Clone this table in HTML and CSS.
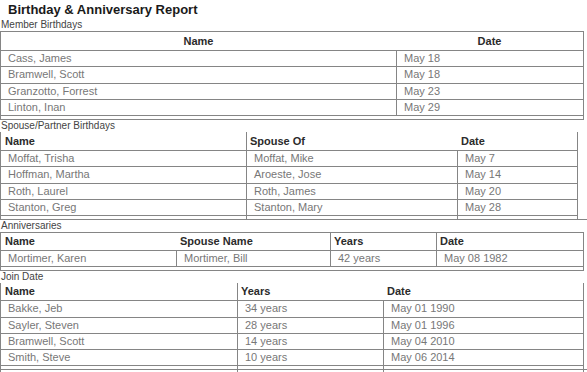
FILE: index.html
```html
<!DOCTYPE html>
<html lang="en">
<head>
<meta charset="utf-8">
<title>Birthday &amp; Anniversary Report</title>
<link rel="stylesheet" href="styles.css">
</head>
<body>
<main class="report">
  <h1 class="title">Birthday &amp; Anniversary Report</h1>

  <div class="sec-label">Member Birthdays</div>
  <div class="tbl tbl--top t1">
    <div class="tr th-row th-row--tall">
      <div class="th th--center">Name</div>
      <div class="th th--center">Date</div>
    </div>
    <div class="tr"><div class="td">Cass, James</div><div class="td sep">May 18</div></div>
    <div class="tr"><div class="td">Bramwell, Scott</div><div class="td sep">May 18</div></div>
    <div class="tr"><div class="td">Granzotto, Forrest</div><div class="td sep">May 23</div></div>
    <div class="tr"><div class="td">Linton, Inan</div><div class="td sep">May 29</div></div>
    <div class="spacer"></div>
  </div>

  <div class="sec-label">Spouse/Partner Birthdays</div>
  <div class="tbl tbl--open t2">
    <div class="tr th-row th-row--mid">
      <div class="th">Name</div>
      <div class="th sep">Spouse Of</div>
      <div class="th">Date</div>
    </div>
    <div class="tr"><div class="td">Moffat, Trisha</div><div class="td sep">Moffat, Mike</div><div class="td sep">May 7</div></div>
    <div class="tr"><div class="td">Hoffman, Martha</div><div class="td sep">Aroeste, Jose</div><div class="td sep">May 14</div></div>
    <div class="tr"><div class="td">Roth, Laurel</div><div class="td sep">Roth, James</div><div class="td sep">May 20</div></div>
    <div class="tr"><div class="td">Stanton, Greg</div><div class="td sep">Stanton, Mary</div><div class="td sep">May 28</div></div>
    <div class="tr spacer-row"><div></div><div class="sep"></div><div class="sep"></div></div>
  </div>
  <div class="rule"></div>

  <div class="sec-label">Anniversaries</div>
  <div class="tbl tbl--top t3">
    <div class="tr th-row">
      <div class="th">Name</div>
      <div class="th">Spouse Name</div>
      <div class="th sep">Years</div>
      <div class="th sep">Date</div>
    </div>
    <div class="tr"><div class="td">Mortimer, Karen</div><div class="td sep">Mortimer, Bill</div><div class="td sep">42 years</div><div class="td sep">May 08 1982</div></div>
    <div class="spacer"></div>
  </div>

  <div class="sec-label">Join Date</div>
  <div class="tbl tbl--open t4">
    <div class="tr th-row">
      <div class="th">Name</div>
      <div class="th sep">Years</div>
      <div class="th">Date</div>
    </div>
    <div class="tr"><div class="td">Bakke, Jeb</div><div class="td sep">34 years</div><div class="td sep">May 01 1990</div></div>
    <div class="tr"><div class="td">Sayler, Steven</div><div class="td sep">28 years</div><div class="td sep">May 01 1996</div></div>
    <div class="tr"><div class="td">Bramwell, Scott</div><div class="td sep">14 years</div><div class="td sep">May 04 2010</div></div>
    <div class="tr"><div class="td">Smith, Steve</div><div class="td sep">10 years</div><div class="td sep">May 06 2014</div></div>
    <div class="tr spacer-row"><div></div><div class="sep"></div><div class="sep"></div></div>
  </div>
  <div class="rule"></div>
  <div class="tbl tbl--open t4 tail">
    <div class="tr spacer-row spacer-row--tail"><div></div><div class="sep"></div><div class="sep"></div></div>
  </div>
</main>
</body>
</html>
```

FILE: styles.css
```css
html, body {
  margin: 0;
  padding: 0;
  background: #fff;
}

.report {
  font-family: "Liberation Sans", Arial, sans-serif;
  width: 587px;
  overflow: hidden;
}

.title {
  margin: 0;
  padding: 1px 0 1px 8px;
  font-size: 13px;
  line-height: 17px;
  font-weight: bold;
  color: #1a1a1a;
}

.sec-label {
  font-size: 10px;
  line-height: 12px;
  height: 12px;
  padding-left: 1px;
  color: #444;
  white-space: nowrap;
}

.tbl {
  box-sizing: border-box;
  width: 584px;
  border-left: 1px solid #858585;
  border-right: 1px solid #858585;
  border-bottom: 1px solid #858585;
}

.tbl--top {
  border-top: 1px solid #858585;
}

.tbl--open {
  border-bottom: none;
}

.tr {
  display: grid;
  box-sizing: border-box;
  height: 16.25px;
  border-bottom: 1px solid #858585;
}

.th-row {
  height: 18px;
}

.th-row--mid {
  height: 19px;
}

.th-row--tall {
  height: 19px;
}

.td,
.th {
  font-size: 11px;
  line-height: 15px;
  white-space: nowrap;
  overflow: hidden;
  display: flex;
  align-items: center;
}

.td {
  padding-left: 7px;
  color: #777;
}

.th {
  padding-left: 4px;
  font-weight: bold;
  color: #2b2b2b;
}

.th--center {
  justify-content: center;
  padding-left: 0;
}

.sep {
  border-left: 1px solid #858585;
}

.th.sep {
  padding-left: 3px;
}

.spacer {
  height: 3px;
}

.spacer-row {
  height: 3px;
  border-bottom: none;
}

.spacer-row--tail {
  height: 6px;
}

.rule {
  width: 587px;
  border-top: 1px solid #858585;
}

.tail {
  border-bottom: none;
}

.t1 .tr { grid-template-columns: 395px 1fr; }

.t2 { width: 578px; }
.t2 .tr { grid-template-columns: 245px 211px 1fr; }

.t3 .tr { grid-template-columns: 175px 154px 106px 1fr; }

.t4 .tr { grid-template-columns: 236px 146px 1fr; }
```
